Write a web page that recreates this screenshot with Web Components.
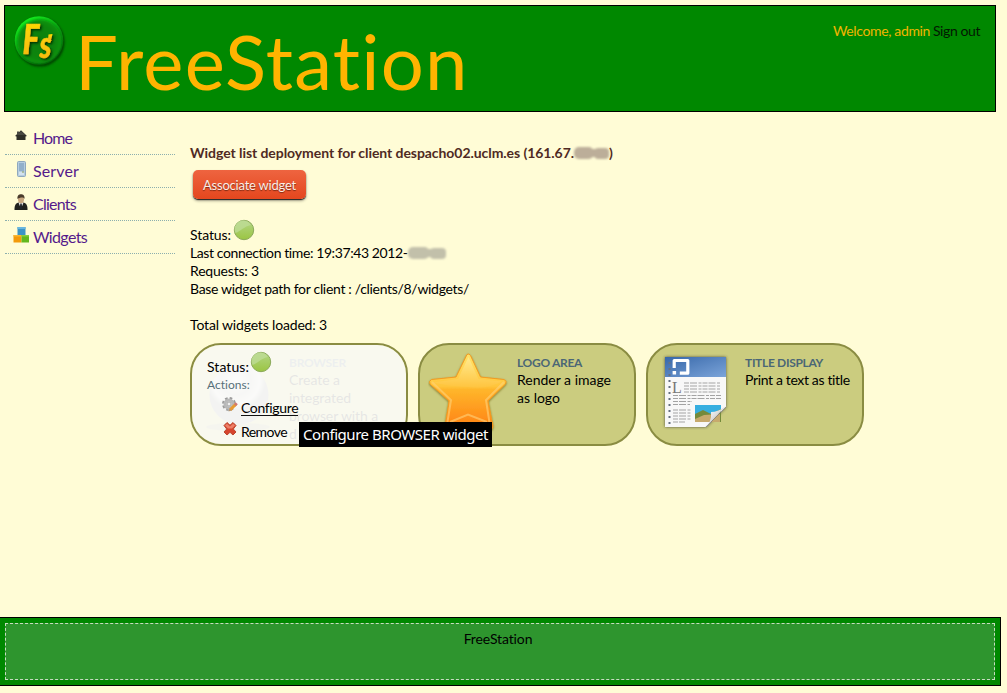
<!DOCTYPE html>
<html lang="en"><head><meta charset="utf-8"><title>FreeStation</title>
<style>
html,body{margin:0;height:100%;overflow:hidden}
body{background:#fffcd6;font:14px/18px Lato,"Liberation Sans",sans-serif;color:#000}
</style></head><body>
<fs-app></fs-app>
<script>
const define=(name,css,html,init)=>customElements.define(name,class extends HTMLElement{
  connectedCallback(){
    if(this.shadowRoot)return;
    const t=document.createElement('template');
    t.innerHTML=`<style>:host{display:block;box-sizing:border-box}*{box-sizing:border-box}${css}</style>`+(typeof html==='function'?html(this):html);
    this.attachShadow({mode:'open'}).appendChild(t.content.cloneNode(true));
    if(init)init(this);
  }
});

/* Text tracked out to a given width. */
define('fit-text',':host{display:inline-block;white-space:nowrap}span{display:inline-block}','<span><slot></slot></span>',el=>{
  const s=el.shadowRoot.querySelector('span'),w=+el.getAttribute('w');
  const n=el.shadowRoot.querySelector('slot').assignedNodes({flatten:true}).map(x=>x.textContent).join('').length||1;
  s.style.letterSpacing=(w-s.getBoundingClientRect().width)/n+'px';
  el.style.width=w+'px';
});

define('fs-logo',':host{width:54px;height:54px}svg{display:block}',`
<svg width="54" height="54" viewBox="0 0 54 54"><defs>
<radialGradient id="g" cx=".5" cy=".5" r=".5"><stop offset="0" stop-color="#087f0c"/><stop offset=".75" stop-color="#07860b"/><stop offset="1" stop-color="#07970c"/></radialGradient>
<linearGradient id="r" x1=".2" y1="0" x2=".8" y2="1"><stop offset="0" stop-color="#14fa20"/><stop offset=".45" stop-color="#0ba512"/><stop offset="1" stop-color="#044006"/></linearGradient>
<linearGradient id="y" x1="0" y1="0" x2="0" y2="1"><stop offset="0" stop-color="#ffe000"/><stop offset="1" stop-color="#f5b414"/></linearGradient>
<filter id="b"><feGaussianBlur stdDeviation="1"/></filter>
<filter id="k" x="-30%" y="-30%" width="160%" height="160%"><feDropShadow dx="1.500" dy="1.500" stdDeviation=".9" flood-color="#023004"/></filter></defs>
<circle cx="26" cy="26" r="24.500" fill="#013f03" filter="url(#b)"/>
<circle cx="25" cy="24.500" r="24.300" fill="url(#r)"/><circle cx="25.500" cy="25.500" r="22.300" fill="url(#g)" filter="url(#b)"/>
<g font-family="Lato" font-weight="900" font-style="italic" fill="url(#y)" stroke="#eebd10" stroke-width=".5" filter="url(#k)"><text x="8.500" y="38" font-size="41" textLength="17" lengthAdjust="spacingAndGlyphs">F</text><text x="25.500" y="41.500" font-size="38" textLength="12" lengthAdjust="spacingAndGlyphs">s</text><path d="M34.500 18.500l4-.5-1.500 6h-3z" stroke="none"/></g></svg>`);

define('fs-header',`:host{margin:5px 11px 0 4px;height:107px;background:#080;border:1px solid #000;display:flex;align-items:flex-start}
fs-logo{margin:10px 0 0 9px}
h1{margin:9px 0 0 7px;font-size:76px;line-height:92px;font-weight:400;color:#ffb400}
.u{margin:16px 15px 0 auto;color:#f1b500;display:flex;gap:3px}.o{color:#031703}`,`
<fs-logo></fs-logo><h1><fit-text w="395">FreeStation</fit-text></h1>
<div class="u"><fit-text w="97">Welcome, admin</fit-text><fit-text class="o" w="47">Sign out</fit-text></div>`);

const icons={
home:'<path d="M8 2.300 14 8l-1.500.4V12H3.500V8.600L2 8z" fill="#2e2e29"/><path d="M4 3.500h2v3H4zM8 3l4.500 4H4z" fill="#494943"/>',
server:'<rect x="4.500" y=".5" width="8" height="15" rx="1" fill="#b6cde0" stroke="#8fa8bd"/><path d="M6 3h5M6 5h5M6 7h5M6 9h5" stroke="#6e92b4"/><path d="M6 11h5v3H6z" fill="#d3e2ee"/><path d="M9 11h2" stroke="#8a9c5c"/>',
clients:'<path d="M1.500 16c0-4 .5-6.500 4-7.500h5c3.500 1 4 3.500 4 7.500z" fill="#20211f"/><path d="M5.500 8.500 8 15l2.500-6.500z" fill="#e8e9ec"/><path d="M7.300 9.500h1.400L9.300 15H6.700z" fill="#20242b"/><ellipse cx="8" cy="5.200" rx="3" ry="4" fill="#c9a780"/><path d="M4.500 5C4 1.500 6 .2 8 .2s4 1.300 3.500 4.800C10.500 2.800 7 3.500 4.500 5z" fill="#4a3b2c"/>',
widgets:'<path d="M4.500 0h8v8.500h-8z" fill="#3c94c6"/><path d="M4.500 0h8v2h-8z" fill="#68b6df"/><path d="M.5 8h8v7.500h-8z" fill="#f39a0b"/><path d="M8.500 8H16v7.500H8.500z" fill="#63b81d"/><path d="M.5 8h8v1.500h-8z" fill="#f8b733"/><path d="M8.500 8H16v1.500H8.500z" fill="#86d03d"/>',
gear:'<circle cx="7" cy="7" r="5" fill="none" stroke="#9b9b9b" stroke-width="4" stroke-dasharray="2.200 1.720"/><circle cx="7" cy="7" r="4" fill="none" stroke="#b8b8b8" stroke-width="3"/><circle cx="7" cy="7" r="2" fill="#eee" stroke="#888" stroke-width=".7"/><path d="m8 13 6-6" stroke="#e99b32" stroke-width="3"/><path d="m13 8 1.800-1.800" stroke="#cf7773" stroke-width="3"/><path d="m6.500 14.500 1-3 2 2z" fill="#b69570"/>',
remove:'<path d="m2 4.500 3-3 3 2.700 3-2.700 3 3L11.300 8l2.700 3-3 3-3-2.700L5 14l-3-3L4.700 8z" fill="#d6452e" stroke="#bd4931"/><path d="m3 4.500 2-1.700L8 5.500l3-2.700 2 1.700-3 3H6z" fill="#ed8069"/>'
};
define('fs-icon',':host{display:inline-block;width:16px;height:16px;flex:none}svg{display:block}',el=>`<svg width="16" height="16" viewBox="0 0 16 16">${icons[el.getAttribute('name')]}</svg>`);

define('nav-item',`:host{height:33px;border-bottom:1px dotted #8cafae;display:flex;padding:6px 0 0 8px;font-size:16px;line-height:20px;color:#551a8b}
fs-icon{margin:0 4px 0 0}`,el=>`<fs-icon name="${el.getAttribute('icon')}"></fs-icon><fit-text w="${el.getAttribute('w')}">${el.textContent}</fit-text>`);
define('fs-nav',':host{width:170px;margin:10px 0 0 5px;flex:none}',`
<nav-item icon="home" w="39">Home</nav-item><nav-item icon="server" w="46">Server</nav-item><nav-item icon="clients" w="43">Clients</nav-item><nav-item icon="widgets" w="54">Widgets</nav-item>`);

define('status-dot',':host{display:inline-block;width:22px;height:22px}svg{display:block}',`
<svg width="22" height="22"><defs><linearGradient id="d" x2="0" y2="1"><stop stop-color="#b3d685"/><stop offset="1" stop-color="#9bc543"/></linearGradient></defs>
<circle cx="11" cy="11" r="9.700" fill="url(#d)" stroke="#8ba95a"/><path d="M2.500 14A8.700 8.700 0 0 1 18 6C11 7.500 8 12 2.500 14z" fill="#bfdc98" opacity=".75"/></svg>`);

define('smudge-mark',':host{display:inline-block;height:16px}svg{display:block;overflow:visible}',el=>{
  const w=+el.getAttribute('w'),c=el.getAttribute('tone');
  return `<svg width="${w}" height="16"><defs><filter id="s"><feGaussianBlur stdDeviation="1.300"/></filter></defs><g fill="${c}" filter="url(#s)"><rect x="0" y="3" width="${w*.56}" height="12" rx="5"/><rect x="${w*.4}" y="5" width="${w*.3}" height="8"/><rect x="${w*.58}" y="4" width="${w*.42}" height="11" rx="4"/></g></svg>`});

define('red-button',`:host{width:113px;height:29px;border-radius:5px;background:linear-gradient(#ee6440,#e4471e);box-shadow:0 1px 1px #222,0 2px 3px #0005;color:#fdeee6;font-size:13px;line-height:30px;padding-left:10px;text-shadow:0 1px 1px #7a2a14}`,'<fit-text w="93"><slot></slot></fit-text>');

const art={
globe:`<defs><radialGradient id="q" cx=".45" cy=".25"><stop stop-color="#eeeff2"/><stop offset=".5" stop-color="#b9bcc0"/><stop offset=".8" stop-color="#dddfe4"/><stop offset="1" stop-color="#8e9298"/></radialGradient></defs><ellipse cx="38" cy="75" rx="32" ry="4" fill="#777" opacity=".4"/><circle cx="39" cy="43" r="29.500" fill="url(#q)"/>`,
star:`<defs><linearGradient id="q" x2="0" y2="1"><stop stop-color="#ffe36a"/><stop offset=".42" stop-color="#ffc53b"/><stop offset=".46" stop-color="#ffb62b"/><stop offset="1" stop-color="#ff7d12"/></linearGradient><linearGradient id="h" x2="0" y2="1"><stop stop-color="#fff6b8"/><stop offset="1" stop-color="#ffc444"/></linearGradient><filter id="s" x="-20%" y="-20%" width="140%" height="140%"><feDropShadow dx="0" dy="1" stdDeviation="1.200" flood-color="#6d5b10" flood-opacity=".7"/></filter></defs>
<path filter="url(#s)" d="M39 2.500Q41 1 42.500 3.500L52.500 25 76 27.500Q79.500 29 77.500 32L60 49 65 74Q64 79 60 79L40.500 71 21 79Q17 79 17 74L21 49 2 32Q.5 29 3.500 27.500L28 25z" fill="url(#q)" stroke="#f29a20"/>
<path d="M40.500 5 50.500 27 74 29.500Q57 38 40 35 19 34 5 30.500L30 27z" fill="url(#h)" opacity=".5"/><path d="m4 30 19 18-4 25M76 30 58 48l4 26M22 70l18-7.500 19 7.500" fill="none" stroke="#ffd27a" stroke-width="2" opacity=".6"/>`,
doc:`<defs><linearGradient id="q" x2="1" y2="1"><stop stop-color="#3767a9"/><stop offset="1" stop-color="#7ba4d9"/></linearGradient><linearGradient id="c" x1="0" y1="0" x2="1" y2="1"><stop stop-color="#fff"/><stop offset=".4" stop-color="#e5e5e5"/><stop offset="1" stop-color="#999"/></linearGradient><filter id="s" x="-20%" y="-20%" width="140%" height="140%"><feDropShadow dx="0" dy="0" stdDeviation="1.500" flood-color="#333" flood-opacity=".8"/></filter></defs>
<path filter="url(#s)" d="M9 5h61v50L50 75H9z" fill="#f8f8f8"/><path d="M9 5h61v20H9z" fill="url(#q)"/>
<path d="M18.200 16V8.500h13.600v12.700h-8" fill="none" stroke="#fff" stroke-width="3.200" stroke-linejoin="round"/><path d="M16.600 19h3.500v3.600h-3.500z" fill="#fff"/>
<path d="M13.500 10v63" stroke="#667181" stroke-width="2" stroke-dasharray="2 4"/>
<text x="16" y="41" font-family="Liberation Serif" font-size="16" fill="#777">L</text>
<path d="M28 31h37M28 34h37M28 37h37M28 40h37M17 43.500h48M17 46.500h48M17 49.500h19M17 52.500h17M17 58h18M17 61h18M17 64h18M17 67h18M17 70h12" stroke="#777" stroke-width="1.200" stroke-dasharray="5 1 7 1.500 3 1" opacity=".65"/>
<path d="M39 53h26v17H39z" fill="#36aee0"/><path d="M39 62l8-4 8 4 10-5v13H39z" fill="#748a3b"/><path d="M39 67l9-4 16-1v8H39z" fill="#c7aa6d"/>
<path d="M49 75Q56 70 55 60 62 60 70 54L50 75z" fill="url(#c)"/><path d="M70 55 50 75" stroke="#777" stroke-width=".7"/>`
};
define('widget-card',`:host{width:218px;height:103px;border:2px solid #8a8c42;border-radius:31px;background:#cbcc7f;display:grid;grid-template:99px/97px 1fr;overflow:hidden}
.a,.t,.o{grid-row:1}.a{grid-column:1;padding:7px 0 0 8px}.a svg{display:block}.t{grid-column:2;padding-top:9px}.t b{display:block;font-size:12px;color:#4b6776;line-height:17px}
.o{grid-column:1/3;background:rgba(253,253,251,.91);position:relative}.o:not(.on){display:none}`,el=>`
<div class="a"><svg width="82" height="82">${art[el.getAttribute('art')]}</svg></div><div class="t"><b><fit-text w="${el.getAttribute('hw')}">${el.getAttribute('heading')}</fit-text></b><slot></slot></div><div class="o ${el.hasAttribute('active')?'on':''}"><slot name="overlay"></slot></div>`);

define('card-actions',`:host{padding:6px 0 0 15px}
.s{display:flex;gap:1px;height:24px}.s fit-text{margin-top:7px}.l{font-size:12px;line-height:16px;color:#56707a;margin-top:2px}
.r{display:flex;padding-left:15px;gap:3px;height:24px;line-height:18px}.r fit-text{margin-top:6px}.r fs-icon{margin-top:4px}.k fit-text{border-bottom:1px solid #111;height:17px}`,`
<div class="s"><fit-text w="42">Status:</fit-text><status-dot></status-dot></div>
<div class="l"><fit-text w="43">Actions:</fit-text></div>
<div class="r k"><fs-icon name="gear"></fs-icon><fit-text w="57">Configure</fit-text></div>
<div class="r"><fs-icon name="remove"></fs-icon><fit-text w="46">Remove</fit-text></div>`);

define('tool-tip',':host{position:absolute;left:109px;top:79px;width:193px;height:25px;background:#000;color:#fff;font:15px/25px "Noto Sans",sans-serif;padding-left:4px}','<fit-text w="185"><slot></slot></fit-text>');

define('fs-main',`:host{padding:32px 0 0 15px}
h2{margin:0;font-size:14px;line-height:18px;color:#4f2a23;display:flex;height:18px}
red-button{margin:8px 0 0 3px}
.st{display:flex;height:26px;margin-top:19px;gap:2px}.st fit-text{margin-top:8px}.st status-dot{margin-top:1px}.ln{height:18px;display:flex}
.tot{margin-top:18px}.cards{display:flex;gap:10px;margin-top:9px;position:relative}`,`
<h2><fit-text w="384">Widget list deployment for client despacho02.uclm.es (161.67.</fit-text><smudge-mark w="35" tone="#bcae99"></smudge-mark><fit-text w="4">)</fit-text></h2>
<red-button>Associate widget</red-button>
<div class="st"><fit-text w="41">Status:</fit-text><status-dot></status-dot></div>
<div class="ln"><fit-text w="218">Last connection time: 19:37:43 2012-</fit-text><smudge-mark w="38" tone="#c2c0aa"></smudge-mark></div>
<div class="ln"><fit-text w="69">Requests: 3</fit-text></div>
<div class="ln"><fit-text w="279">Base widget path for client : /clients/8/widgets/</fit-text></div>
<div class="ln tot"><fit-text w="137">Total widgets loaded: 3</fit-text></div>
<div class="cards">
<widget-card art="globe" heading="BROWSER" hw="57" active><fit-text w="51">Create a</fit-text><br><fit-text w="62">integrated</fit-text><br><fit-text w="89">browser with a</fit-text><br>d<card-actions slot="overlay"></card-actions></widget-card>
<widget-card art="star" heading="LOGO AREA" hw="65"><fit-text w="94">Render a image</fit-text><br><fit-text w="43">as logo</fit-text></widget-card>
<widget-card art="doc" heading="TITLE DISPLAY" hw="78"><fit-text w="105">Print a text as title</fit-text></widget-card>
<tool-tip>Configure BROWSER widget</tool-tip></div>`);

define('fs-footer',`:host{width:1001px;height:69px;background:#080;border:1px solid #000;border-left:0;padding:5px}
div{height:57px;border:1px dashed #c8dcc0;background:#2e952e;text-align:center;padding:6px 4px 0 0}`,'<div><fit-text w="69">FreeStation</fit-text></div>');

define('fs-app',':host{height:693px;display:flex;flex-direction:column}.mid{display:flex;height:505px;flex:none}fs-header,fs-footer{flex:none}',`
<fs-header></fs-header><div class="mid"><fs-nav></fs-nav><fs-main></fs-main></div><fs-footer></fs-footer>`);
</script></body></html>
